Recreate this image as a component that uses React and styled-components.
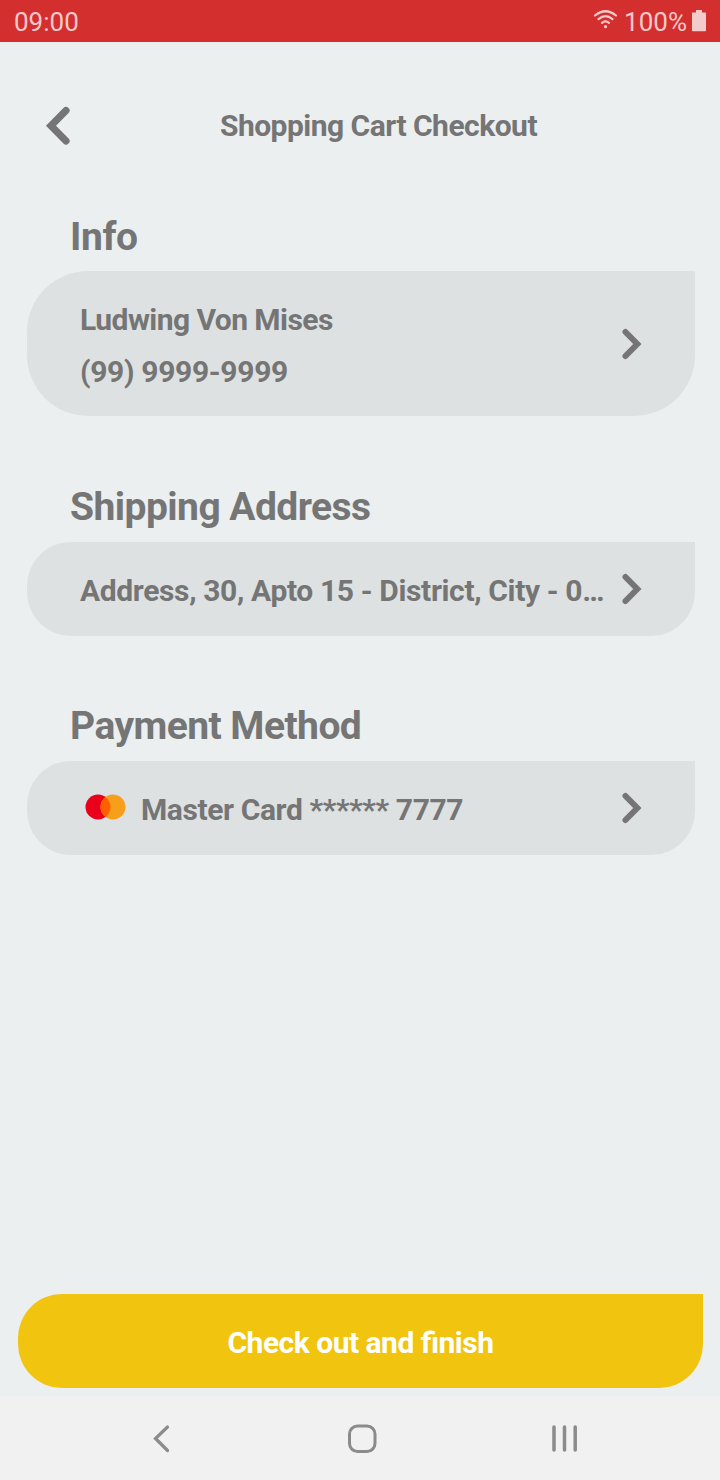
import React from "react";
import styled, { createGlobalStyle } from "styled-components";

const GlobalStyle = createGlobalStyle`
  *, *::before, *::after { box-sizing: border-box; }
  body { margin: 0; background: #ebeff0; }
`;

const Screen = styled.div`
  width: 720px;
  height: 1480px;
  display: flex;
  flex-direction: column;
  overflow: hidden;
  background: #ebeff0;
  color: #757575;
  font-family: Roboto, "Liberation Sans", sans-serif;
  font-weight: 700;
`;

const Icon = styled.svg`
  display: block;
  flex: none;
  fill: none;
`;

const StatusBar = styled.div`
  height: 42px;
  flex: none;
  display: flex;
  align-items: flex-start;
  justify-content: space-between;
  padding: 0 13px 0 14px;
  background: #d32f2f;
  color: #f5c9c9;
  font-size: 26px;
  font-weight: 400;
  line-height: 45px;
`;

const StatusText = styled.span`
  letter-spacing: ${(p) => p.$spacing || 0}px;
`;

const StatusIcons = styled.div`
  display: flex;
  align-items: flex-start;
`;

const Header = styled.header`
  height: 168px;
  flex: none;
  display: flex;
  align-items: center;
  padding-left: 40px;
`;

const BackButton = styled.button`
  width: 36px;
  height: 48px;
  padding: 0;
  border: 0;
  background: none;
`;

const Title = styled.h1`
  flex: 1;
  margin: 0;
  padding-right: 39px;
  text-align: center;
  font-size: 30px;
  line-height: 36px;
  letter-spacing: ${(p) => p.$spacing}px;
`;

const Content = styled.main`
  flex: 1;
  padding: 0 25px 0 27px;
`;

const Section = styled.section`
  margin-bottom: ${(p) => p.$gap || 0}px;
`;

const SectionTitle = styled.h2`
  height: ${(p) => p.$height || 61}px;
  margin: 0;
  padding: 4px 0 0 43px;
  font-size: 39px;
  line-height: 46px;
  letter-spacing: ${(p) => p.$spacing}px;
`;

const Card = styled.div`
  height: ${(p) => (p.$tall ? 145 : 94)}px;
  display: flex;
  align-items: center;
  justify-content: space-between;
  padding: 0 52px 0 53px;
  border-radius: ${(p) => (p.$tall ? "61px 0 61px 61px" : "44px 0 44px 44px")};
  background: #dde1e2;
`;

const CardBody = styled.div`
  min-width: 0;
  padding-top: ${(p) => p.$offset || 3}px;
  font-size: 30px;
`;

const CardLine = styled.div`
  display: flex;
  align-items: center;
  line-height: 52px;
  white-space: pre;
  letter-spacing: ${(p) => p.$spacing}px;
`;

const CardLogo = styled(Icon)`
  margin: -5px 15px 0 5px;
`;

const Footer = styled.footer`
  flex: none;
  padding: 0 17px 8px 18px;
`;

const CheckoutButton = styled.button`
  width: 100%;
  height: 94px;
  padding: 2px 0 0;
  border: 0;
  border-radius: 44px 0 44px 44px;
  background: #f1c40f;
  color: #fff;
  font: inherit;
  font-size: 30px;
  letter-spacing: ${(p) => p.$spacing}px;
  font-feature-settings: "liga" 1;
`;

const NavBar = styled.nav`
  height: 84px;
  flex: none;
  display: flex;
  align-items: center;
  justify-content: space-between;
  padding: 0 140px 0 150px;
  background: #f1f1f1;
`;

const Chevron = () => (
  <Icon width="22" height="34" viewBox="0 0 22 34">
    <path d="M4.500 5 16.300 17 4.500 29" stroke="#757575" strokeWidth="6" strokeLinecap="round" />
  </Icon>
);

export default function App() {
  return (
    <Screen>
      <GlobalStyle />
      <StatusBar>
        <StatusText>09:00</StatusText>
        <StatusIcons>
          <Icon width="31" height="42" viewBox="0 0 31 42" stroke="#f5c9c9" strokeWidth="2.200" strokeLinecap="round">
            <path d="M2 15.500Q12.500 7 23 15.500M5.500 19.200Q12.500 13.200 19.500 19.200M9 22.800Q12.500 19.800 16 22.800" />
            <circle cx="12.500" cy="26.700" r="1.600" fill="#f5c9c9" stroke="none" />
          </Icon>
          <StatusText>100%</StatusText>
          <Icon width="20" height="42" viewBox="0 0 20 42">
            <path d="M9 10h6v2.500h3.500q.5 0 .5.500v17.500q0 .7-.7.700H5.700q-.7 0-.7-.7V13q0-.5.500-.5H9z" fill="#f2cbcb" />
          </Icon>
        </StatusIcons>
      </StatusBar>

      <Header>
        <BackButton aria-label="Back">
          <Icon width="36" height="48" viewBox="0 0 36 48">
            <path d="M26 8.500 11 23.700 26 39" stroke="#757575" strokeWidth="7.200" strokeLinecap="round" />
          </Icon>
        </BackButton>
        <Title $spacing={-0.52}>Shopping Cart Checkout</Title>
      </Header>

      <Content>
        <Section $gap={64}>
          <SectionTitle $spacing={-0.4}>Info</SectionTitle>
          <Card $tall>
            <CardBody $offset={5}>
              <CardLine $spacing={-0.56}>Ludwing Von Mises</CardLine>
              <CardLine $spacing={-0.32}>(99) 9999-9999</CardLine>
            </CardBody>
            <Chevron />
          </Card>
        </Section>

        <Section $gap={63}>
          <SectionTitle $height={62} $spacing={-0.55}>Shipping Address</SectionTitle>
          <Card>
            <CardBody>
              <CardLine $spacing={-0.36}>Address, 30, Apto 15 - District, City - 0…</CardLine>
            </CardBody>
            <Chevron />
          </Card>
        </Section>

        <Section>
          <SectionTitle $height={62} $spacing={-0.55}>Payment Method</SectionTitle>
          <Card>
            <CardBody>
              <CardLine $spacing={-0.4}>
                <CardLogo width="41" height="26" viewBox="0 0 41 26">
                  <circle cx="13" cy="13" r="12.500" fill="#eb001b" />
                  <circle cx="28" cy="13" r="12.500" fill="#f79e1b" />
                  <path d="M20.500 3a12.500 12.500 0 0 1 0 20a12.500 12.500 0 0 1 0-20z" fill="#ff5f00" />
                </CardLogo>
                <span>Master Card ****** 7777</span>
              </CardLine>
            </CardBody>
            <Chevron />
          </Card>
        </Section>
      </Content>

      <Footer>
        <CheckoutButton $spacing={-0.5}>Check out and finish</CheckoutButton>
      </Footer>

      <NavBar>
        <Icon width="24" height="32" viewBox="0 0 24 32">
          <path d="M17.500 5 5.500 16.500 17.500 28.500" stroke="#8b8b8b" strokeWidth="3.200" strokeLinecap="round" />
        </Icon>
        <Icon width="32" height="32" viewBox="0 0 32 32">
          <rect x="3.500" y="4" width="25.500" height="25.500" rx="8" stroke="#8b8b8b" strokeWidth="3" />
        </Icon>
        <Icon width="30" height="32" viewBox="0 0 30 32">
          <path d="M4 5V28M14.500 5V28M25.200 5V28" stroke="#8b8b8b" strokeWidth="3.500" strokeLinecap="round" />
        </Icon>
      </NavBar>
    </Screen>
  );
}
